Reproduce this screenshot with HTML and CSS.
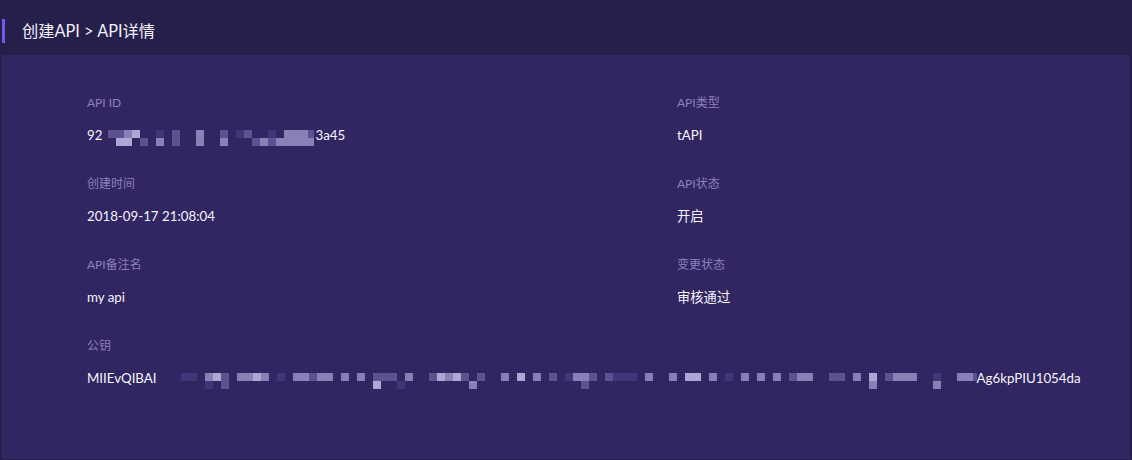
FILE: index.html
```html
<!DOCTYPE html>
<html lang="zh-CN">
<head>
<meta charset="utf-8">
<link rel="stylesheet" href="styles.css">
</head>
<body>
<div class="page">
  <header class="header">
    <span class="accent"></span>
    <h1 class="title">创建API &gt; API详情</h1>
  </header>
  <main class="panel">
    <div class="grid">
      <div class="field">
        <div class="label">API ID</div>
        <div class="value">92<span class="mosaic id" data-top="2234..1.2..3..2.12..1.33322" data-bot=".44.2.3.2..3..3...232333332211"></span>3a45</div>
      </div>
      <div class="field">
        <div class="label">API类型</div>
        <div class="value">tAPI</div>
      </div>
      <div class="field">
        <div class="label">创建时间</div>
        <div class="value">2018-09-17 21:08:04</div>
      </div>
      <div class="field">
        <div class="label">API状态</div>
        <div class="value">开启</div>
      </div>
      <div class="field">
        <div class="label">API备注名</div>
        <div class="value">my api</div>
      </div>
      <div class="field">
        <div class="label">变更状态</div>
        <div class="value">审核通过</div>
      </div>
      <div class="field wide">
        <div class="label">公钥</div>
        <div class="value">MIIEvQIBAI<span class="mosaic key" data-top="..11.342.3343.1.33233.3.3.222.3..24342.2..3.4.3.2.1332.2111.3..3.44.3.1.3.3.3.233..22.3.4.2333..1..3322" data-bot=".....1.2..................4..1........3.............2...................................3.......3"></span>Ag6kpPIU1054da</div>
      </div>
    </div>
  </main>
</div>
<script src="script.js"></script>
</body>
</html>
```

FILE: styles.css
```css
* { box-sizing: border-box; }
html, body { margin: 0; padding: 0; }
body {
  background: #251f4b;
  font-family: Lato, "Noto Sans", "Noto Sans CJK SC", sans-serif;
  color: #ffffff;
}
.page {
  width: 1132px;
  height: 460px;
  display: flex;
  flex-direction: column;
}
.header {
  height: 55px;
  display: flex;
  align-items: flex-start;
  padding-top: 19px;
  background: #251f4b;
}
.accent {
  width: 3px;
  height: 24px;
  margin-left: 2px;
  background: #7658ee;
}
.title {
  margin: 0 0 0 17px;
  font-size: 16.3px;
  font-weight: 400;
  line-height: 24px;
  color: #f2f0fa;
}
.panel {
  margin: 0 2px 0 2px;
  height: 405px;
  background: #312661;
  border-bottom: 1px solid #271f50;
  padding: 37px 0 0 85px;
}
.grid {
  display: grid;
  grid-template-columns: 590px 1fr;
  row-gap: 28px;
}
.field { display: flex; flex-direction: column; gap: 12px; }
.wide { grid-column: 1 / span 2; }
.label {
  font-size: 12px;
  line-height: 20px;
  color: #8c80bd;
  padding-top: 1px;
}
.value {
  font-size: 13.3px;
  line-height: 20px;
  color: #f6f4fb;
  display: flex;
  align-items: center;
  white-space: nowrap;
}
.mosaic {
  display: inline-grid;
  grid-auto-flow: column;
  grid-template-rows: 8px 8px;
  grid-auto-columns: 8px;
  overflow: hidden;
  flex: none;
  transform: translateY(3px);
}
.mosaic.id { width: 206px; margin: 0 1px 0 6px; }
.mosaic.key { width: 812px; margin: 0 0 0 8px; }
.c0 { background: transparent; }
.c1 { background: #41367a; }
.c2 { background: #5d5290; }
.c3 { background: #8a80b6; }
.c4 { background: #aea6d4; }
```

FILE: script.js
```js
document.querySelectorAll('.mosaic').forEach(function (m) {
  var top = m.dataset.top, bot = m.dataset.bot;
  var n = Math.max(top.length, bot.length);
  for (var i = 0; i < n; i++) {
    [top[i], bot[i]].forEach(function (ch) {
      var c = document.createElement('i');
      var lvl = (ch && ch !== '.') ? ch : '0';
      c.className = 'c' + lvl;
      m.appendChild(c);
    });
  }
});
```
